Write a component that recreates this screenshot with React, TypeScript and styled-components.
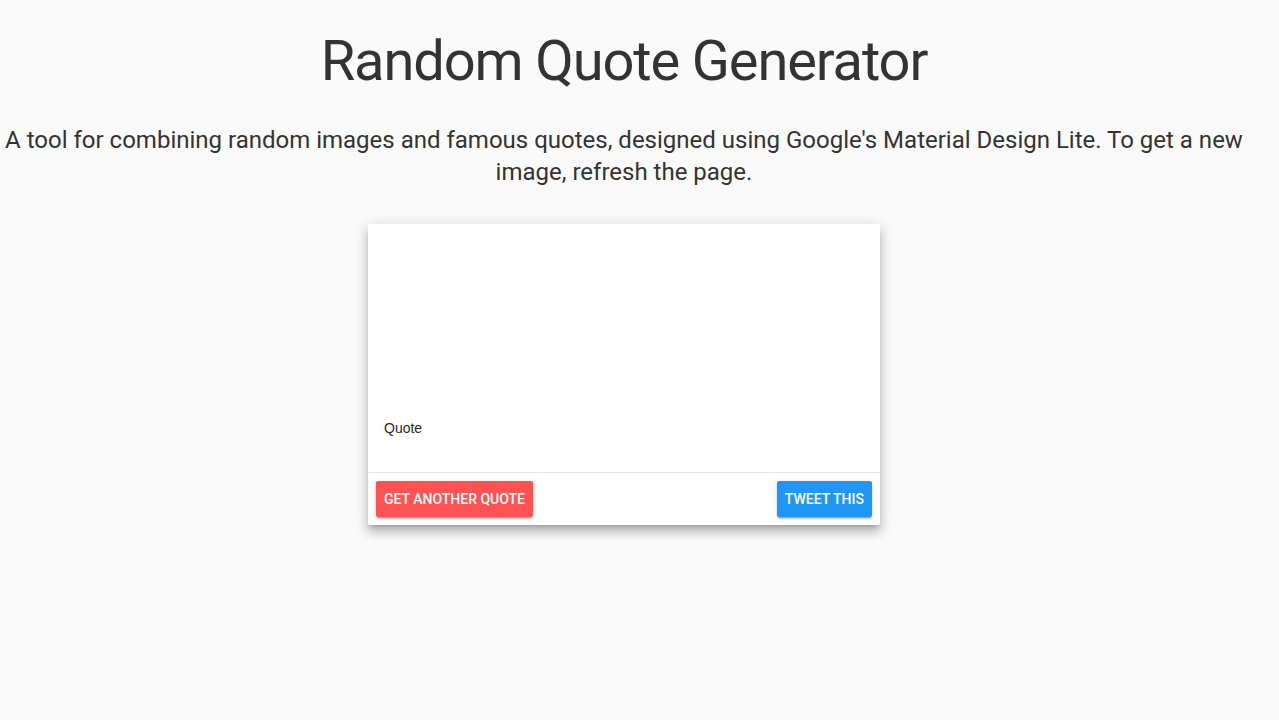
import React from "react";
import styled, { createGlobalStyle } from "styled-components";

const Global = createGlobalStyle`
  html, body { margin: 0; padding: 0; background: #fafafa; }
  body { font-family: Roboto, "Helvetica Neue", Arial, sans-serif; color: #333; }
`;

const Page = styled.main`
  width: 1248px;
  min-height: 720px;
  box-sizing: border-box;
  display: flex;
  flex-direction: column;
  align-items: center;
  padding-top: 25px;
  padding-bottom: 40px;
`;

const Title = styled.h1`
  margin: 0;
  font-family: Roboto, sans-serif;
  font-size: 56px;
  font-weight: 400;
  line-height: 72px;
  letter-spacing: -0.02em;
  color: #333;
  text-align: center;
`;

const Subtitle = styled.h5`
  margin: 27px 0 0;
  font-family: Roboto, sans-serif;
  font-size: 24px;
  font-weight: 400;
  line-height: 32px;
  color: #333;
  text-align: center;
`;

const Card = styled.section`
  margin-top: 36px;
  width: 512px;
  background: #fff;
  border-radius: 2px;
  display: flex;
  flex-direction: column;
  box-shadow: 0 8px 10px 1px rgba(0, 0, 0, 0.14), 0 3px 14px 2px rgba(0, 0, 0, 0.12),
    0 5px 5px -3px rgba(0, 0, 0, 0.2);
`;

const CardBody = styled.div`
  height: 248px;
  box-sizing: border-box;
  display: flex;
  flex-direction: column;
  justify-content: flex-end;
  padding: 0 16px 35px;
`;

const QuoteText = styled.p`
  margin: 0;
  font-family: "Liberation Sans", Arial, sans-serif;
  font-size: 14px;
  line-height: 18px;
  color: #262626;
`;

const Actions = styled.div`
  border-top: 1px solid rgba(0, 0, 0, 0.1);
  padding: 8px;
  display: flex;
  justify-content: space-between;
  align-items: center;
`;

const Button = styled.button<{ $bg: string }>`
  height: 36px;
  padding: 0 8px;
  border: none;
  border-radius: 2px;
  background: ${(p) => p.$bg};
  color: #fff;
  font-family: Roboto, sans-serif;
  font-size: 14px;
  font-weight: 500;
  text-transform: uppercase;
  letter-spacing: 0;
  cursor: pointer;
  box-shadow: 0 2px 2px 0 rgba(0, 0, 0, 0.14), 0 3px 1px -2px rgba(0, 0, 0, 0.2),
    0 1px 5px 0 rgba(0, 0, 0, 0.12);
`;

export default function App() {
  return (
    <>
      <Global />
      <Page>
        <Title>Random Quote Generator</Title>
        <Subtitle>
          A tool for combining random images and famous quotes, designed using Google's Material
          Design Lite. To get a new image, refresh the page.
        </Subtitle>
        <Card>
          <CardBody>
            <QuoteText>Quote</QuoteText>
          </CardBody>
          <Actions>
            <Button $bg="#ff5252">Get another quote</Button>
            <Button $bg="#2196f3">Tweet this</Button>
          </Actions>
        </Card>
      </Page>
    </>
  );
}
